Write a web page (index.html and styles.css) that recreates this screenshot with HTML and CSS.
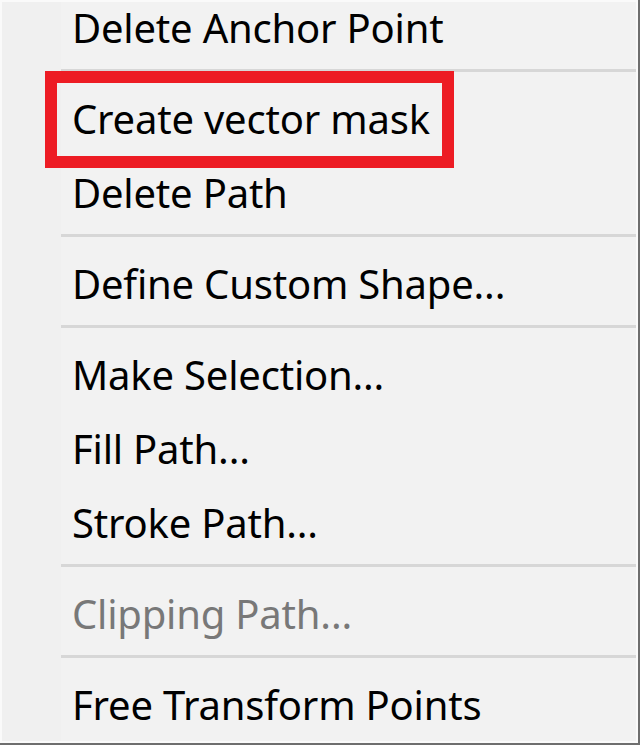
FILE: index.html
```html
<!DOCTYPE html>
<html lang="en">
<head>
<meta charset="utf-8">
<title>Path context menu</title>
<link rel="stylesheet" href="styles.css">
</head>
<body>
<div class="frame">
  <div class="menu">
    <div class="item first">Delete Anchor Point</div>
    <div class="sep"></div>
    <div class="item highlight-wrap">Create vector mask<span class="callout"></span></div>
    <div class="item">Delete Path</div>
    <div class="sep"></div>
    <div class="item">Define Custom Shape...</div>
    <div class="sep"></div>
    <div class="item">Make Selection...</div>
    <div class="item">Fill Path...</div>
    <div class="item">Stroke Path...</div>
    <div class="sep"></div>
    <div class="item disabled">Clipping Path...</div>
    <div class="sep"></div>
    <div class="item">Free Transform Points</div>
  </div>
</div>
</body>
</html>
```

FILE: styles.css
```css
html, body {
  margin: 0;
  padding: 0;
  width: 640px;
  height: 745px;
  overflow: hidden;
  background: #f0f0f0;
}

.frame {
  box-sizing: border-box;
  width: 640px;
  height: 745px;
  border-right: 2px solid #6e6e6e;
  border-bottom: 2px solid #6e6e6e;
  overflow: hidden;
}

.menu {
  box-sizing: border-box;
  height: 100%;
  border: 2px solid #fafafa;
  background: linear-gradient(to right, #f0f0f0 0, #f0f0f0 59px, #f2f2f2 59px);
  display: flex;
  flex-direction: column;
  font-family: "Noto Sans", "Open Sans", sans-serif;
  font-size: 40px;
  color: #000;
}

.item {
  position: relative;
  box-sizing: border-box;
  flex: none;
  height: 74px;
  display: flex;
  align-items: center;
  padding-left: 70px;
  padding-top: 4px;
  letter-spacing: -0.2px;
  white-space: nowrap;
}

.item.first {
  height: 60px;
  padding-top: 0;
  align-items: flex-start;
  line-height: 52px;
}

.item.disabled {
  color: #787878;
}

.sep {
  flex: none;
  height: 17px;
  margin-left: 59px;
  display: flex;
  align-items: center;
}

.sep::before {
  content: "";
  display: block;
  width: 100%;
  height: 3px;
  background: #d7d7d7;
}

.callout {
  position: absolute;
  left: 43px;
  top: -8px;
  width: 409px;
  height: 97px;
  box-sizing: border-box;
  border: 12px solid #ed1c24;
}
```
